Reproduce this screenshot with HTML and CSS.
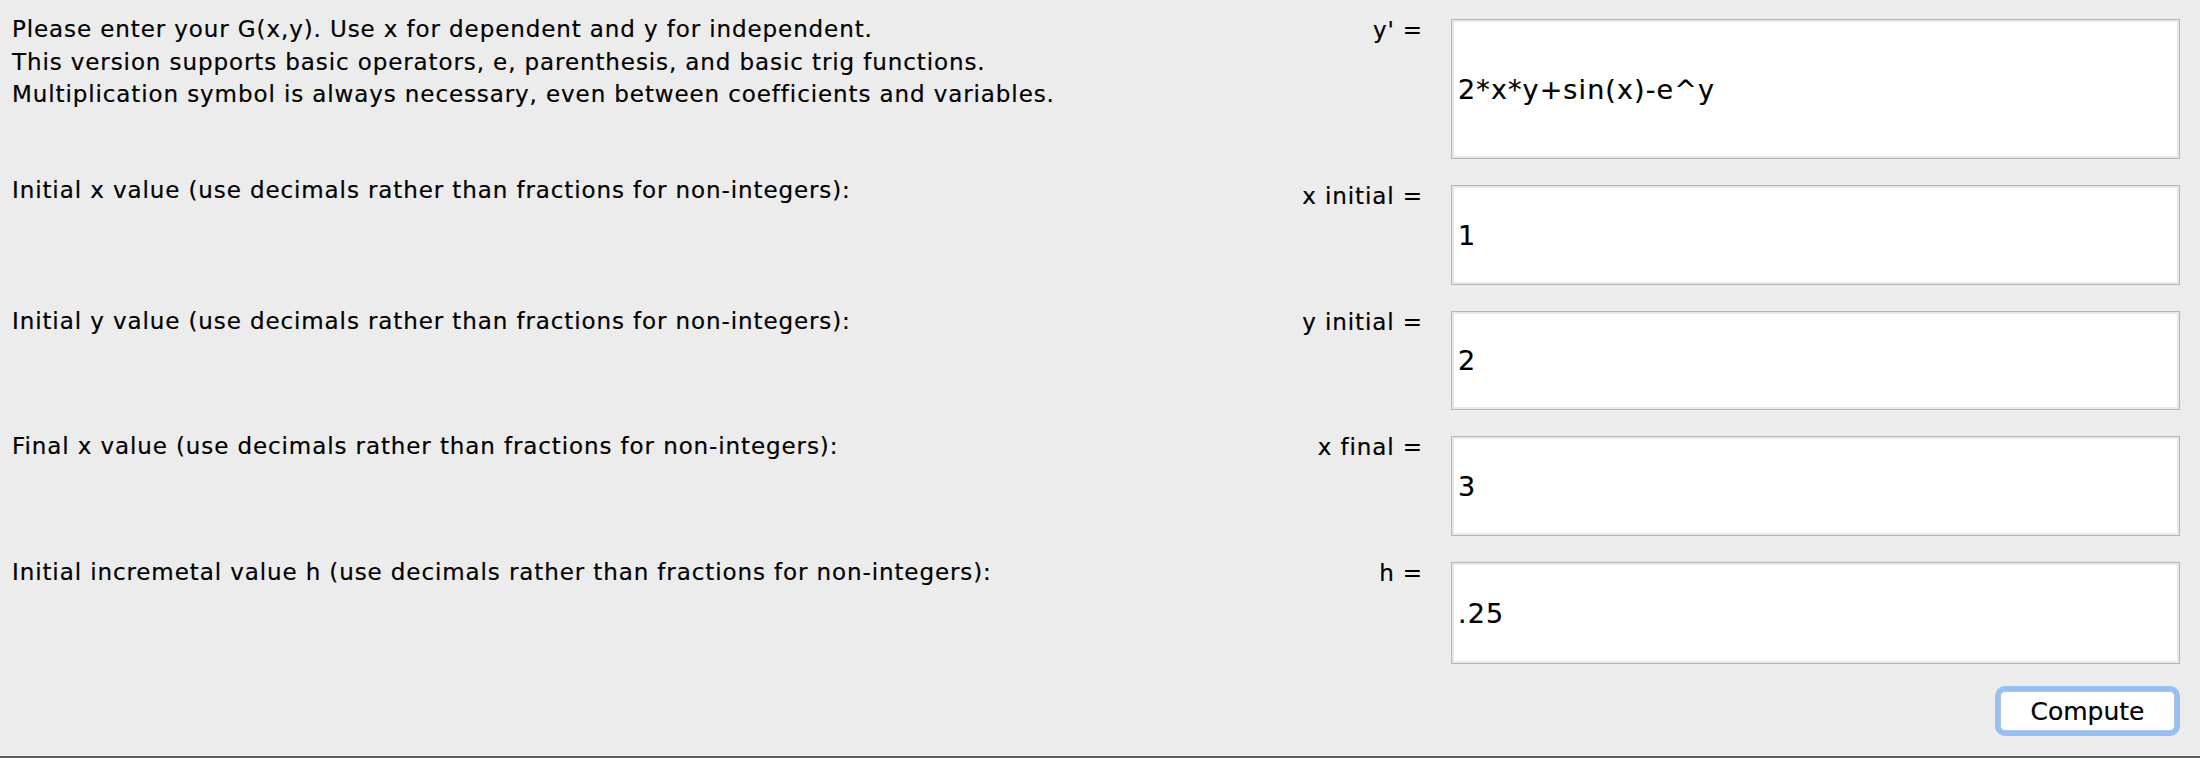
FILE: index.html
```html
<!DOCTYPE html>
<html lang="en">
<head>
<meta charset="utf-8">
<title>Euler Solver</title>
<link rel="stylesheet" href="styles.css">
</head>
<body>
<div class="window">
  <div class="form">
    <div class="desc">Please enter your G(x,y). Use x for dependent and y for independent.<br>This version supports basic operators, e, parenthesis, and basic trig functions.<br>Multiplication symbol is always necessary, even between coefficients and variables.</div>
    <div class="lbl">y' =</div>
    <input class="field" type="text" value="2*x*y+sin(x)-e^y">

    <div class="desc raised">Initial x value (use decimals rather than fractions for non-integers):</div>
    <div class="lbl">x initial =</div>
    <input class="field" type="text" value="1">

    <div class="desc">Initial y value (use decimals rather than fractions for non-integers):</div>
    <div class="lbl">y initial =</div>
    <input class="field" type="text" value="2">

    <div class="desc">Final x value (use decimals rather than fractions for non-integers):</div>
    <div class="lbl">x final =</div>
    <input class="field" type="text" value="3">

    <div class="desc">Initial incremetal value h (use decimals rather than fractions for non-integers):</div>
    <div class="lbl">h =</div>
    <input class="field" type="text" value=".25">
  </div>
  <div class="actions">
    <button class="compute" type="button">Compute</button>
  </div>
</div>
</body>
</html>
```

FILE: styles.css
```css
html, body {
  margin: 0;
  padding: 0;
  background: #ececec;
}

body {
  width: 2200px;
  height: 758px;
  overflow: hidden;
  box-sizing: border-box;
  border-bottom: 2px solid #5e5e5e;
  font-family: "DejaVu Sans", "Liberation Sans", sans-serif;
  font-size: 23px;
  letter-spacing: 0.9px;
  color: #000;
  -webkit-text-stroke: 0.2px #000;
}

.window {
  padding: 19px 20px 0 12px;
}

.form {
  display: grid;
  grid-template-columns: 1fr auto 729px;
  grid-template-rows: 140px 100px 99px 100px 102px;
  column-gap: 28px;
  row-gap: 26px;
}

.desc,
.lbl {
  line-height: 32.5px;
  margin-top: -6px;
  white-space: nowrap;
}

.desc.raised {
  margin-top: -11px;
}

.lbl {
  margin-top: -5px;
  text-align: right;
}

.field {
  box-sizing: border-box;
  width: 100%;
  height: 100%;
  margin: 0;
  padding: 0 0 0 6px;
  border: 1px solid #b4b4b4;
  box-shadow: inset 0 0 0 2px #e8e8e8;
  background: #fff;
  font-family: "DejaVu Sans", "Liberation Sans", sans-serif;
  font-size: 27px;
  letter-spacing: 1.1px;
  color: #000;
  -webkit-text-stroke: 0.2px #000;
  outline: none;
}

.actions {
  display: flex;
  justify-content: flex-end;
  padding-top: 27px;
  padding-right: 5px;
}

.compute {
  width: 175px;
  height: 40px;
  margin: 0;
  padding: 0;
  border: 1px solid #a9c6ea;
  border-radius: 5px;
  background: #fff;
  box-shadow: 0 0 0 5px #95c0f0;
  font-family: "DejaVu Sans", "Liberation Sans", sans-serif;
  font-size: 25px;
  letter-spacing: 0;
  color: #000;
  -webkit-text-stroke: 0.2px #000;
}
```
